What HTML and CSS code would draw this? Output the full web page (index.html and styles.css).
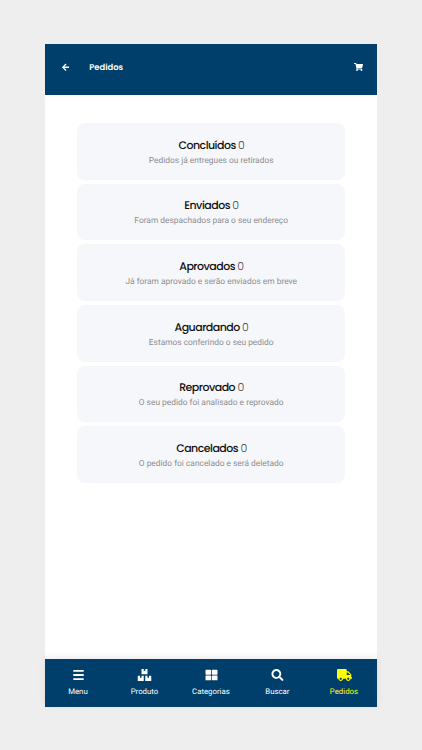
FILE: index.html
```html
<!DOCTYPE html>
<html lang="pt-BR">
  <head>
    <meta charset="UTF-8" />
    <meta name="viewport" content="width=device-width, initial-scale=1.0" />
    <title>Pedidos</title>
    <link rel="stylesheet" href="styles.css">
  </head>
  <body>
    <div class="app">
      <header class="header">
        <svg class="back" viewBox="0 0 448 512"><path d="M257.500 445.100l-22.200 22.200c-9.400 9.400-24.600 9.400-33.900 0L7 273c-9.400-9.400-9.400-24.600 0-33.900L201.400 44.700c9.400-9.400 24.600-9.400 33.900 0l22.200 22.200c9.500 9.500 9.300 25-.4 34.300L136.600 216H424c13.300 0 24 10.700 24 24v32c0 13.300-10.700 24-24 24H136.600l120.500 114.800c9.800 9.300 10 24.800.4 34.300z"/></svg>
        <h1 class="title">Pedidos</h1>
        <svg class="cart" viewBox="0 0 576 512"><path d="M528.100 301.300l47.300-208C578.800 78.300 567.400 64 552 64H159.200l-9.200-44.800C147.800 8 137.900 0 126.500 0H24C10.700 0 0 10.700 0 24v16c0 13.300 10.700 24 24 24h69.900l70.200 343.400C147.300 417.100 136 435.200 136 456c0 30.900 25.100 56 56 56s56-25.100 56-56c0-15.700-6.400-29.800-16.800-40h209.600C430.400 426.200 424 440.300 424 456c0 30.900 25.100 56 56 56s56-25.100 56-56c0-22.200-12.900-41.300-31.600-50.400l5.500-24.300c3.400-15-8-29.300-23.400-29.300H218.100l-6.500-32h293.100c11.200 0 20.900-7.800 23.400-18.700z"/></svg>
      </header>

      <main class="orders">
        <div class="card">
          <p class="status">Concluídos <span class="count">0</span></p>
          <p class="description">Pedidos já entregues ou retirados</p>
        </div>
        <div class="card">
          <p class="status">Enviados <span class="count">0</span></p>
          <p class="description">Foram despachados para o seu endereço</p>
        </div>
        <div class="card">
          <p class="status">Aprovados <span class="count">0</span></p>
          <p class="description">Já foram aprovado e serão enviados em breve</p>
        </div>
        <div class="card">
          <p class="status">Aguardando <span class="count">0</span></p>
          <p class="description">Estamos conferindo o seu pedido</p>
        </div>
        <div class="card">
          <p class="status">Reprovado <span class="count">0</span></p>
          <p class="description">O seu pedido foi analisado e reprovado</p>
        </div>
        <div class="card">
          <p class="status">Cancelados <span class="count">0</span></p>
          <p class="description">O pedido foi cancelado e será deletado</p>
        </div>
      </main>

      <nav class="tabs">
        <a class="tab">
          <svg viewBox="0 0 15 12"><path d="M2.300 1h10.400v1.800H2.300zM2.300 5.100h10.400v1.800H2.300zM2.300 9.200h10.400V11H2.300z"/></svg>
          <span>Menu</span>
        </a>
        <a class="tab">
          <svg viewBox="0 0 576 512"><path d="M560 288h-80v96l-32-21.300-32 21.300v-96h-80c-8.800 0-16 7.200-16 16v192c0 8.800 7.200 16 16 16h224c8.800 0 16-7.200 16-16V304c0-8.800-7.200-16-16-16zm-384-64h224c8.800 0 16-7.200 16-16V16c0-8.800-7.200-16-16-16h-80v96l-32-21.300L256 96V0h-80c-8.800 0-16 7.200-16 16v192c0 8.800 7.200 16 16 16zm64 64h-80v96l-32-21.300L96 384v-96H16c-8.800 0-16 7.200-16 16v192c0 8.800 7.200 16 16 16h224c8.800 0 16-7.200 16-16V304c0-8.800-7.200-16-16-16z"/></svg>
          <span>Produto</span>
        </a>
        <a class="tab">
          <svg viewBox="0 0 512 512"><path d="M296 32h192c13.300 0 24 10.700 24 24v160c0 13.300-10.700 24-24 24H296c-13.300 0-24-10.700-24-24V56c0-13.300 10.700-24 24-24zm-80 0H24C10.700 32 0 42.700 0 56v160c0 13.300 10.700 24 24 24h192c13.300 0 24-10.700 24-24V56c0-13.300-10.700-24-24-24zM0 296v160c0 13.300 10.700 24 24 24h192c13.300 0 24-10.700 24-24V296c0-13.300-10.700-24-24-24H24c-13.300 0-24 10.700-24 24zm296 184h192c13.300 0 24-10.700 24-24V296c0-13.300-10.700-24-24-24H296c-13.300 0-24 10.700-24 24v160c0 13.300 10.700 24 24 24z"/></svg>
          <span>Categorias</span>
        </a>
        <a class="tab">
          <svg viewBox="0 0 512 512"><path d="M505 442.700L405.300 343c-4.500-4.500-10.600-7-17-7H372c27.600-35.300 44-79.700 44-128C416 93.100 322.900 0 208 0S0 93.100 0 208s93.100 208 208 208c48.300 0 92.700-16.400 128-44v16.300c0 6.400 2.500 12.500 7 17l99.700 99.700c9.400 9.400 24.600 9.400 33.900 0l28.300-28.300c9.400-9.400 9.400-24.600.1-34zM208 336c-70.700 0-128-57.200-128-128 0-70.700 57.200-128 128-128 70.700 0 128 57.200 128 128 0 70.700-57.200 128-128 128z"/></svg>
          <span>Buscar</span>
        </a>
        <a class="tab active">
          <svg viewBox="0 0 640 512"><path d="M624 352h-16V243.900c0-12.700-5.100-24.900-14.100-33.900L494 110.100c-9-9-21.200-14.100-33.900-14.100H416V48c0-26.500-21.500-48-48-48H48C21.500 0 0 21.500 0 48v320c0 26.500 21.500 48 48 48h16c0 53 43 96 96 96s96-43 96-96h128c0 53 43 96 96 96s96-43 96-96h48c8.800 0 16-7.200 16-16v-32c0-8.800-7.200-16-16-16zM160 464c-26.500 0-48-21.500-48-48s21.500-48 48-48 48 21.500 48 48-21.500 48-48 48zm320 0c-26.500 0-48-21.500-48-48s21.500-48 48-48 48 21.500 48 48-21.500 48-48 48zm80-208H416V144h44.100l99.900 99.900V256z"/></svg>
          <span>Pedidos</span>
        </a>
      </nav>
    </div>
  </body>
</html>
```
FILE: styles.css
```css
* {
  box-sizing: border-box;
}
body {
  margin: 0;
  height: 750px;
  padding: 43.5px 44.7px 43px;
  background-color: #eeeeee;
  font-family: Roboto, sans-serif;
  text-rendering: geometricPrecision;
}
svg {
  display: block;
  fill: currentColor;
}
.app {
  display: flex;
  flex-direction: column;
  width: 332.5px;
  height: 663.5px;
  background-color: #fff;
}
.header {
  display: flex;
  align-items: center;
  height: 51.5px;
  padding: 0 14.5px 4px 17px;
  background-color: #003e6b;
  color: #fff;
}
.back {
  width: 7.5px;
  height: 8.5px;
}
.title {
  margin: 0 auto 0 20px;
  font-family: Poppins, Inter, sans-serif;
  font-size: 8.4px;
  font-weight: 600;
}
.cart {
  width: 9px;
  height: 8px;
}
.orders {
  flex: 1;
  display: flex;
  flex-direction: column;
  gap: 4.2px;
  padding: 28px 32px 0 32.5px;
}
.card {
  height: 56.5px;
  padding-top: 13.7px;
  border-radius: 8px;
  background-color: #f6f7fb;
  text-align: center;
}
.status {
  margin: 0;
  padding-left: 1px;
  font-family: Poppins, Inter, sans-serif;
  font-size: 11px;
  font-weight: 500;
  line-height: 16px;
  letter-spacing: -0.53px;
  color: #111;
}
.count {
  font-weight: 300;
  letter-spacing: 0;
  color: #444;
}
.description {
  margin: 1px 0 0;
  font-size: 8.4px;
  line-height: 15.4px;
  color: #8c8d90;
}
.tabs {
  display: grid;
  grid-template-columns: repeat(5, 1fr);
  height: 48px;
  background-color: #003e6b;
  box-shadow: 0 -2px 8px rgba(0, 0, 0, 0.08);
}
.tab {
  display: flex;
  flex-direction: column;
  align-items: center;
  gap: 5.5px;
  padding-top: 10px;
  font-size: 7.8px;
  line-height: 10px;
  color: #fff;
}
.tab svg {
  width: 15px;
  height: 12px;
  margin-left: 1px;
}
.tab.active {
  color: #ffff00;
}
```
